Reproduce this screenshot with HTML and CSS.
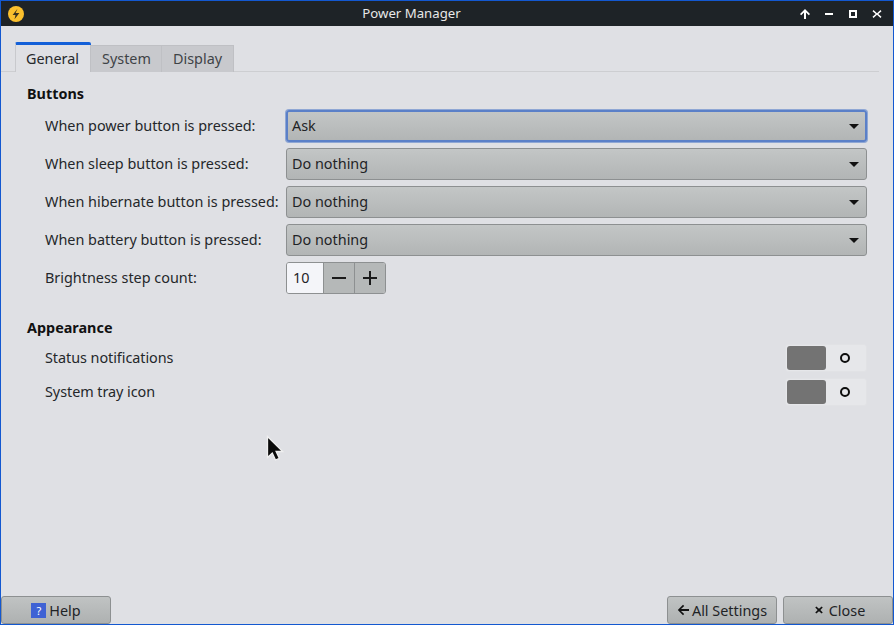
FILE: index.html
```html
<!DOCTYPE html>
<html lang="en">
<head>
<meta charset="utf-8">
<title>Power Manager</title>
<link rel="stylesheet" href="styles.css">
</head>
<body>
<div class="window">
  <header class="titlebar">
    <svg class="app-icon" width="16" height="16" viewBox="0 0 16 16"><circle cx="8" cy="8" r="8" fill="#fbc02d"/><path d="M9.500 2.800 4.600 8.900h2.900l-1 4.300 4.900-6.100H7.600z" fill="#3a3320"/></svg>
    <div class="title">Power Manager</div>
    <div class="controls">
      <svg width="12" height="12" viewBox="0 0 12 12"><path d="M6 1 1 6l1.200 1.200L5 4.600V11h2V4.600l2.800 2.600L11 6z" fill="#fff"/></svg>
      <svg width="12" height="12" viewBox="0 0 12 12"><rect x="2" y="5" width="8" height="2" fill="#fff"/></svg>
      <svg width="12" height="12" viewBox="0 0 12 12"><path d="M2 2h8v8H2zm2 2v4h4V4z" fill="#fff" fill-rule="evenodd"/></svg>
      <svg width="12" height="12" viewBox="0 0 12 12"><path d="M2.500 2 6 5.200 9.500 2 10.500 3.200 7.300 6l3.200 2.800-1 1.200L6 6.800 2.500 10l-1-1.200L4.700 6 1.500 3.200z" fill="#fff"/></svg>
    </div>
  </header>
  <main class="content">
    <nav class="tabs">
      <div class="tab active">General</div>
      <div class="tab system">System</div>
      <div class="tab">Display</div>
    </nav>
    <section class="panel">
      <h2 class="heading">Buttons</h2>
      <div class="form">
        <div class="label">When power button is pressed:</div>
        <div class="combo focused"><span>Ask</span><i class="caret"></i></div>
        <div class="label">When sleep button is pressed:</div>
        <div class="combo"><span>Do nothing</span><i class="caret"></i></div>
        <div class="label">When hibernate button is pressed:</div>
        <div class="combo"><span>Do nothing</span><i class="caret"></i></div>
        <div class="label">When battery button is pressed:</div>
        <div class="combo"><span>Do nothing</span><i class="caret"></i></div>
        <div class="label">Brightness step count:</div>
        <div class="spin">
          <div class="spin-value">10</div>
          <div class="spin-btn"><svg width="14" height="14" viewBox="0 0 14 14"><rect x="0" y="6" width="14" height="2" fill="#1a1a1a"/></svg></div>
          <div class="spin-btn"><svg width="14" height="14" viewBox="0 0 14 14"><path d="M6 0h2v6h6v2H8v6H6V8H0V6h6z" fill="#1a1a1a"/></svg></div>
        </div>
      </div>
      <h2 class="heading appearance">Appearance</h2>
      <div class="switch-row">
        <div class="label">Status notifications</div>
        <div class="switch"><div class="knob"></div><div class="ring"></div></div>
      </div>
      <div class="switch-row">
        <div class="label">System tray icon</div>
        <div class="switch"><div class="knob"></div><div class="ring"></div></div>
      </div>
    </section>
    <footer class="actions">
      <button class="btn"><span class="help-icon">?</span>Help</button>
      <div class="spacer"></div>
      <button class="btn"><svg width="12" height="12" viewBox="0 0 12 12"><path d="M6 .8 .8 6 6 11.200l1.200-1.200L4 7h8V5H4l3.200-3z" fill="#111"/></svg>All Settings</button>
      <button class="btn"><svg class="x" width="8" height="8" viewBox="0 0 9 9"><path d="M1.500 .5 4.500 3 7.500 .5 8.700 1.800 6 4.500 8.700 7.200 7.500 8.500 4.500 6 1.500 8.500 .3 7.200 3 4.500 .3 1.800z" fill="#111"/></svg>Close</button>
    </footer>
  </main>
  <svg class="cursor" width="20" height="28" viewBox="0 0 20 28"><path d="M1.500 1.500v21l4.800-4.500 3.200 7 3.800-1.700-3.200-6.800h6.600z" fill="#0a0a0a" stroke="#efefef" stroke-width="1.300"/></svg>
</div>
</body>
</html>
```
FILE: styles.css
```css
* { box-sizing: border-box; }
html, body { margin: 0; padding: 0; height: 100%; }
body {
  font-family: "Noto Sans", sans-serif;
  font-size: 14.4px;
  color: #1f2326;
  background: #dfe0e4;
  overflow: hidden;
}
.window {
  position: relative;
  width: 894px;
  height: 625px;
  display: flex;
  flex-direction: column;
  border: 1px solid #1358d0;
  background: #dfe0e4;
}
.titlebar {
  height: 25px;
  flex: none;
  background: #1e2327;
  display: flex;
  align-items: center;
  padding: 0 6px 0 7px;
}
.app-icon { flex: none; }
.title {
  flex: 1;
  text-align: center;
  color: #e8e8e8;
  font-size: 13.2px;
  padding-bottom: 1px;
}
.controls { display: flex; gap: 12px; padding-right: 4px; padding-left: 0; }
.content {
  flex: 1;
  display: flex;
  flex-direction: column;
  min-height: 0;
}
.tabs {
  display: flex;
  align-items: flex-end;
  height: 46px;
  padding: 16px 0 0 14px;
  margin-right: 14px;
  border-bottom: 1px solid #cdced1;
}
.tab {
  height: 27px;
  padding: 0 11px;
  line-height: 25px;
  color: #3f4347;
  background: #c8c9cd;
  border: 1px solid #bfc0c4;
  border-bottom: 0;
  margin-left: -1px;
  margin-bottom: -1px;
}
.tab.system { padding-right: 10px; }
.tab.active {
  height: 30px;
  margin-left: 0;
  margin-bottom: -1px;
  line-height: 27px;
  background: #dfe0e4;
  color: #26292c;
  border: 0;
  border-top: 3px solid #1360d8;
  border-left: 1px solid #c8c9cd;
  border-radius: 2px 2px 0 0;
  padding: 0 12px 0 10px;
}
.panel { flex: 1; padding: 11px 26px 0 26px; }
.heading {
  margin: 0;
  font-size: 14.4px;
  line-height: 22px;
  font-weight: 700;
  color: #111;
}
.form {
  display: grid;
  grid-template-columns: 241px 581px;
  grid-auto-rows: 32px;
  row-gap: 6px;
  margin: 5px 0 0 18px;
  align-items: center;
  width: 822px;
}
.label { color: #24272a; padding-bottom: 2px; }
.combo {
  height: 32px;
  display: flex;
  align-items: center;
  justify-content: space-between;
  padding: 0 7px 2px 5px;
  background: linear-gradient(#c3c6c6, #b2b5b5);
  border: 1px solid #8d9091;
  border-radius: 3px;
}
.combo.focused {
  border: 2px solid #5b80c8;
  padding: 0 6px 2px 4px;
  box-shadow: 0 0 0 1px #8fa7d4;
}
.caret {
  width: 0;
  height: 0;
  margin-top: 2px;
  border-left: 5.500px solid transparent;
  border-right: 5.500px solid transparent;
  border-top: 5px solid #111;
}
.spin {
  display: flex;
  width: 100px;
  height: 32px;
  border: 1px solid #8d9091;
  border-radius: 3px;
  overflow: hidden;
}
.spin-value {
  width: 36px;
  padding-left: 6px;
  line-height: 29px;
  background: #f4f5f9;
}
.spin-btn {
  flex: 1;
  display: flex;
  align-items: center;
  justify-content: center;
  background: #b5b8b8;
  border-left: 1px solid #8d9091;
}
.appearance { margin-top: 23px; }
.switch-row {
  display: flex;
  align-items: center;
  justify-content: space-between;
  height: 28px;
  margin: 6px 0 0 18px;
  width: 822px;
  letter-spacing: -0.050px;
}
.appearance + .switch-row { margin-top: 5px; }
.switch {
  width: 82px;
  height: 28px;
  display: flex;
  align-items: center;
  padding: 1px 0 1px 1px;
  background: #e6e7ea;
  border: 1px solid #e1e2e5;
  border-radius: 3px;
}
.knob {
  width: 39px;
  height: 24px;
  background: #737373;
  border-radius: 3px;
}
.ring {
  width: 10px;
  height: 10px;
  margin-left: 14px;
  border: 2px solid #0d0d0d;
  border-radius: 50%;
}
.actions {
  display: flex;
  gap: 6px;
  height: 28px;
  flex: none;
}
.spacer { flex: 1; }
.btn {
  width: 110px;
  height: 28px;
  display: flex;
  align-items: center;
  justify-content: center;
  gap: 3px;
  padding: 0;
  font-family: inherit;
  font-size: 14.4px;
  color: #1f2326;
  background: linear-gradient(#c0c3c3, #aeb1b1);
  border: 1px solid #8d9091;
  border-radius: 3px;
}
.btn .x { margin: 0 3px 0 4px; }
.help-icon {
  width: 15px;
  height: 15px;
  line-height: 15px;
  text-align: center;
  font-size: 11px;
  font-weight: 400;
  color: #fff;
  background: #3f62d4;
}
.cursor {
  position: absolute;
  left: 265px;
  top: 434px;
}
```
